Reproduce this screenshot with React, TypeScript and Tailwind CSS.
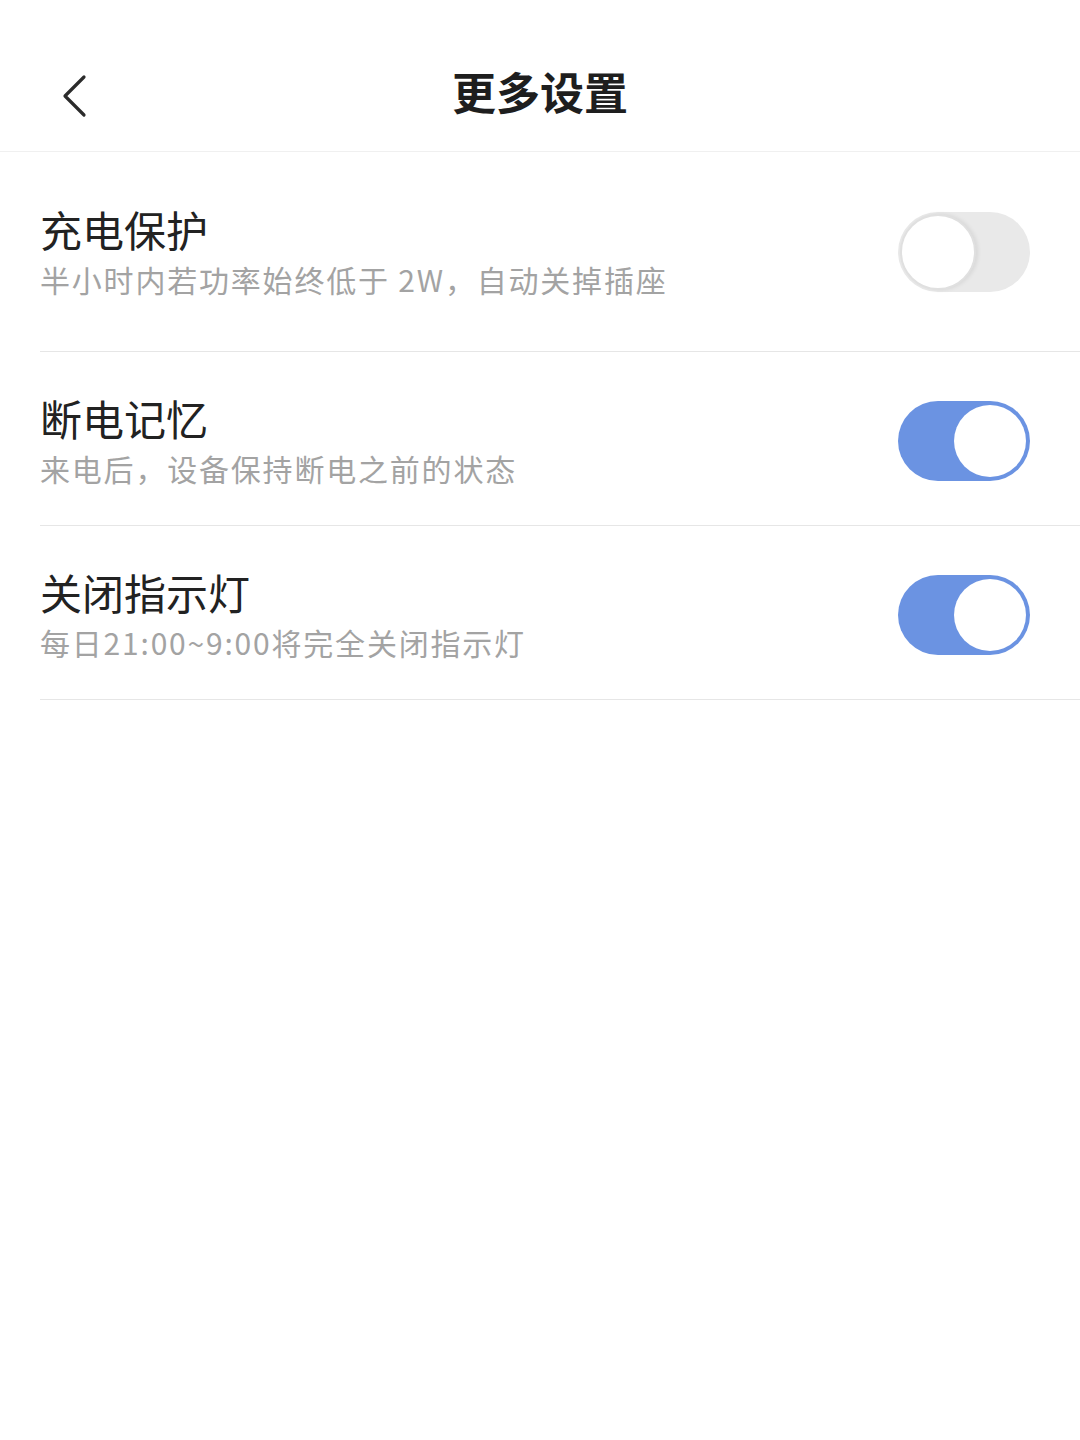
import React from 'react';

const items = [
  { id: 1, title: '充电保护', desc: '半小时内若功率始终低于 2W，自动关掉插座', on: false },
  { id: 2, title: '断电记忆', desc: '来电后，设备保持断电之前的状态', on: true },
  { id: 3, title: '关闭指示灯', desc: '每日21:00~9:00将完全关闭指示灯', on: true },
];

// simple switch, matches the MIUI look
const Toggle = ({ on }: { on: boolean }) =>
  on ? (
    <div className="flex h-[80px] w-[132px] items-center justify-end rounded-full bg-[#6b93e2] pr-[4px]">
      <div className="h-[72px] w-[72px] rounded-full bg-white" />
    </div>
  ) : (
    <div className="flex h-[80px] w-[132px] items-center rounded-full bg-[#e9e9e9] pl-[2px]">
      <div className="h-[76px] w-[76px] rounded-full border-2 border-[#e0e0e0] bg-white shadow-[2px_0_4px_rgba(0,0,0,0.08)]" />
    </div>
  );

const App = () => {
  return (
    <div className="min-h-[1440px] bg-white font-['Noto_Sans_CJK_SC','Noto_Sans',sans-serif]">
      {/* Header */}
      <div className="relative flex h-[152px] items-center justify-center border-b border-[#f0f0f0] pt-[30px]">
        <button className="absolute left-[56px] top-[72px] p-[2px]">
          <svg width="32" height="44" viewBox="0 0 32 44" fill="none">
            <polyline points="26,3 7,22 26,41" stroke="#2b2b2b" strokeWidth="3.2" strokeLinecap="round" strokeLinejoin="round" />
          </svg>
        </button>
        <h1 className="text-[44px] font-bold leading-[56px] text-[#1e1e1e]">更多设置</h1>
      </div>

      {/* Settings list */}
      <div className="pl-[40px]">
        {items.map((item, i) => (
          <div
            key={item.id}
            className={`flex items-center justify-between border-b border-[#e6e6e6] pr-[50px] ${
              i === 0 ? 'pt-[52px] pb-[52px]' : 'pt-[41px] pb-[37px]'
            }`}
          >
            <div>
              <div className="text-[42px] leading-[50px] text-[#222222]">{item.title}</div>
              <div className="mt-[5px] text-[30px] leading-[40px] tracking-[1.8px] text-[#a3a3a3]">{item.desc}</div>
            </div>
            <Toggle on={item.on} />
          </div>
        ))}
      </div>
    </div>
  );
};

export default App;
